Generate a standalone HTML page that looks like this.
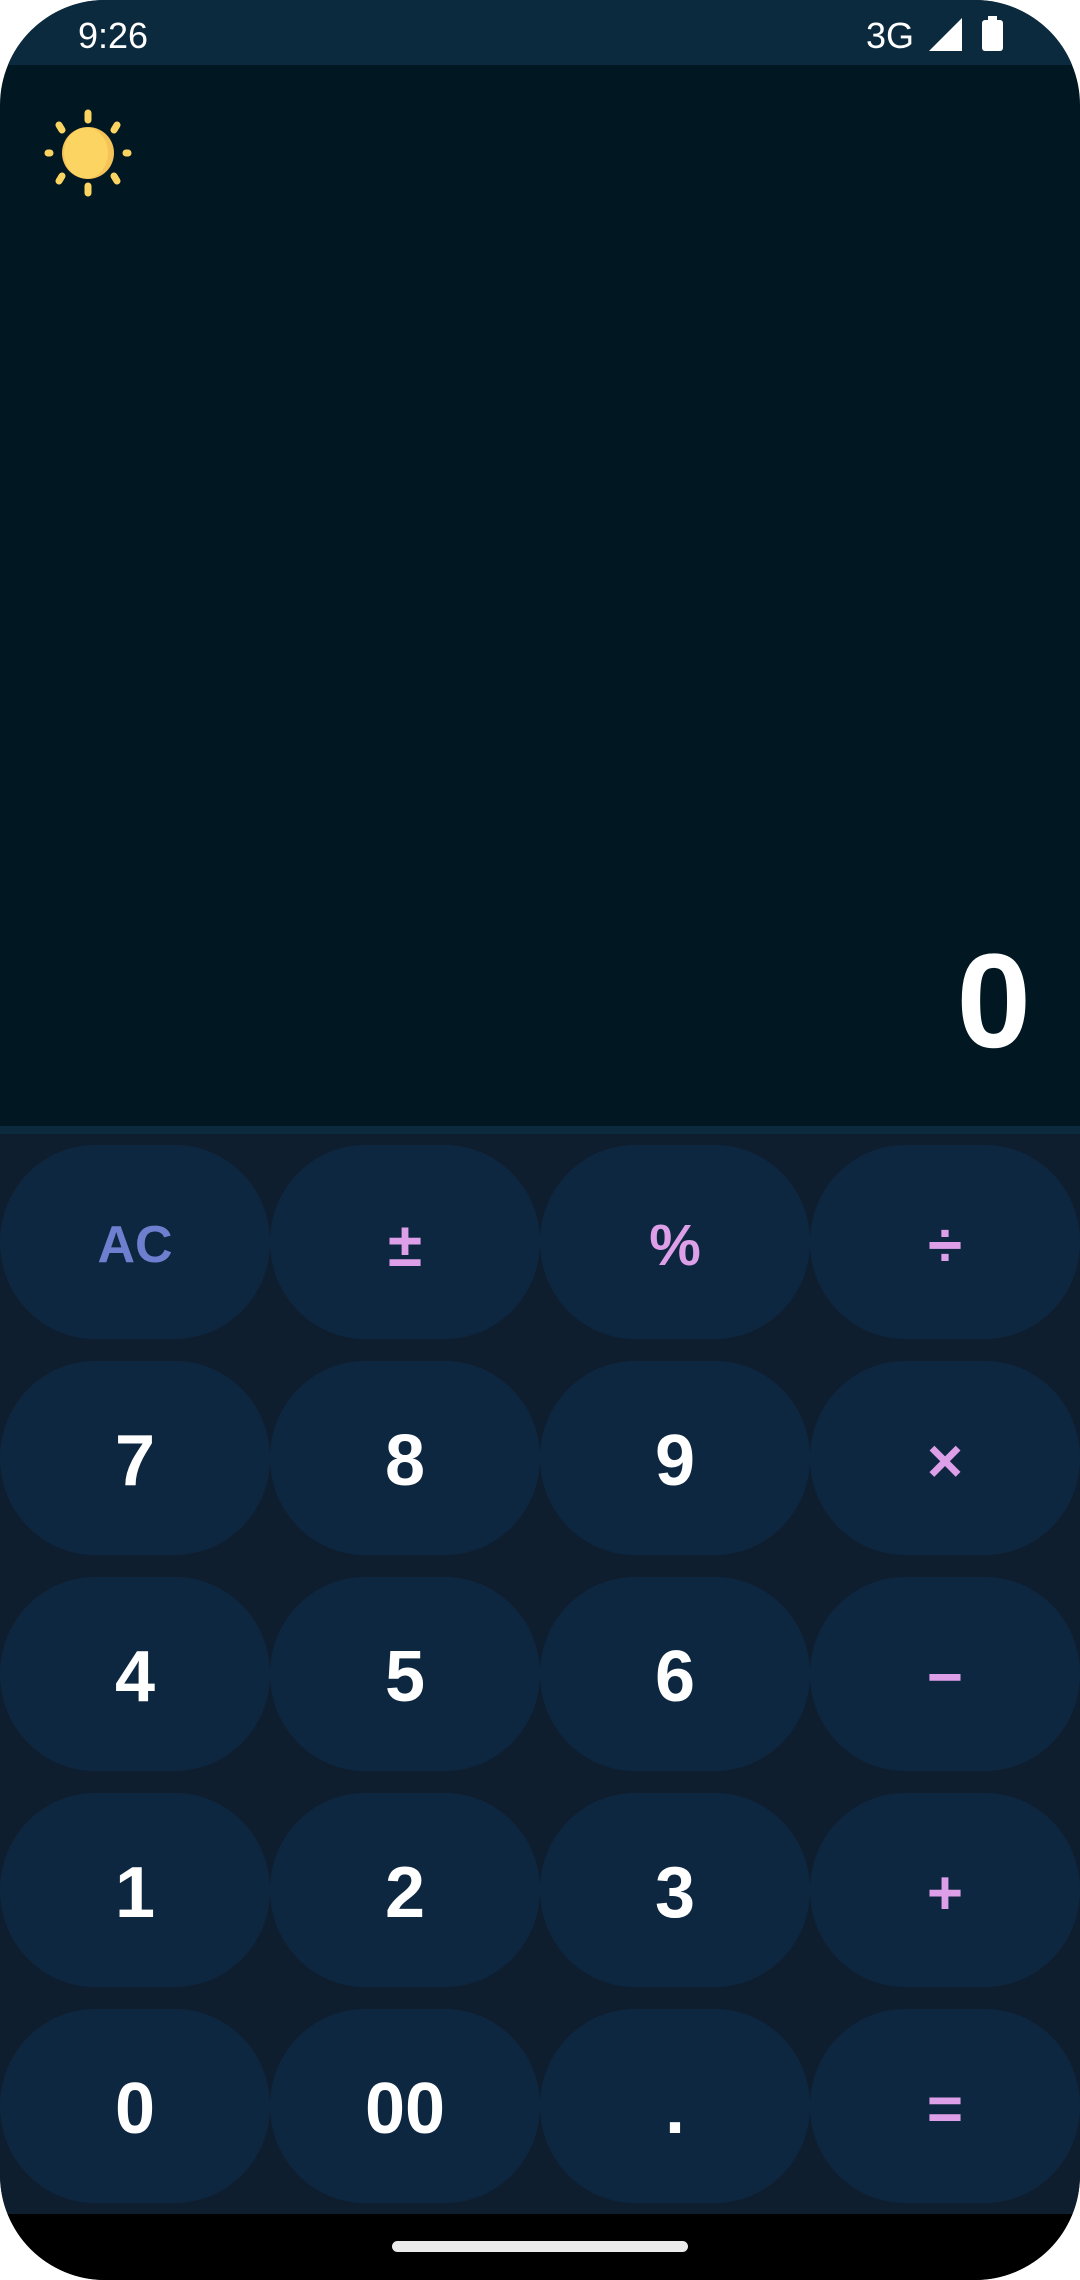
<!DOCTYPE html>
<html><head><meta charset="utf-8"><style>
*{margin:0;padding:0;box-sizing:border-box}
html,body{width:1080px;height:2280px;background:#fff;overflow:hidden}
.phone{position:absolute;left:0;top:0;width:1080px;height:2280px;border-radius:105px;overflow:hidden;background:#011823;font-family:"Liberation Sans",sans-serif}
.sb{position:absolute;left:0;top:0;width:1080px;height:65px;background:#0b2a3e;color:#fff}
.time{position:absolute;left:78px;top:15px;font-size:36px}
.g3{position:absolute;left:866px;top:15px;font-size:36px}
.pad{position:absolute;left:0;top:1126px;width:1080px;height:1088px;background:#0f1e2e;border-top:8px solid #0b2a3d}
.btn{position:absolute;width:270px;height:194px;border-radius:95px/97px;background:#0e2740;color:#fff;font-weight:bold;font-size:72px;display:flex;align-items:center;justify-content:center;padding-top:6px}
.op{color:#dda0e8;font-size:62px}
.nav{position:absolute;left:0;top:2214px;width:1080px;height:66px;background:#000}
.handle{position:absolute;left:392px;top:2241px;width:296px;height:11px;border-radius:6px;background:#ebebeb}
.disp{position:absolute;right:49px;top:927px;color:#fff;font-weight:bold;font-size:134px;line-height:150px}
</style></head><body><div class="phone">
<div class="sb"><div class="time">9:26</div><div class="g3">3G</div>
<svg style="position:absolute;left:926px;top:16px" width="40" height="36"><polygon points="36,2 36,35 3,35" fill="#fff"/></svg>
<svg style="position:absolute;left:980px;top:14px" width="26" height="40"><rect x="8" y="2" width="9" height="5" fill="#fff"/><rect x="2" y="6" width="21" height="31" rx="3" fill="#fff"/></svg>
</div>
<svg style="position:absolute;left:40px;top:105px" width="96" height="96" viewBox="0 0 96 96">
<g stroke="#fcd462" stroke-width="7" stroke-linecap="round">
<line x1="48" y1="8" x2="48" y2="15"/><line x1="48" y1="81" x2="48" y2="88"/>
<line x1="8" y1="48" x2="10" y2="48"/><line x1="86" y1="48" x2="88" y2="48"/>
<line x1="19" y1="20" x2="22" y2="25"/><line x1="77" y1="20" x2="74" y2="25"/>
<line x1="19" y1="76" x2="22" y2="71"/><line x1="77" y1="76" x2="74" y2="71"/>
</g>
<circle cx="48" cy="48" r="26" fill="#f6c358"/>
<ellipse cx="46" cy="48" rx="22" ry="25.5" fill="#fcd462"/>
</svg>
<div class="disp">0</div>
<div class="pad"></div>
<div class="btn" style="left:0;top:1145px;color:#6f7fd0;font-size:52px">AC</div>
<div class="btn op" style="left:270px;top:1145px">±</div>
<div class="btn op" style="left:540px;top:1145px;font-size:58px">%</div>
<div class="btn op" style="left:810px;top:1145px">÷</div>
<div class="btn" style="left:0;top:1361px">7</div>
<div class="btn" style="left:270px;top:1361px">8</div>
<div class="btn" style="left:540px;top:1361px">9</div>
<div class="btn op" style="left:810px;top:1361px">×</div>
<div class="btn" style="left:0;top:1577px">4</div>
<div class="btn" style="left:270px;top:1577px">5</div>
<div class="btn" style="left:540px;top:1577px">6</div>
<div class="btn op" style="left:810px;top:1577px">−</div>
<div class="btn" style="left:0;top:1793px">1</div>
<div class="btn" style="left:270px;top:1793px">2</div>
<div class="btn" style="left:540px;top:1793px">3</div>
<div class="btn op" style="left:810px;top:1793px">+</div>
<div class="btn" style="left:0;top:2009px">0</div>
<div class="btn" style="left:270px;top:2009px">00</div>
<div class="btn" style="left:540px;top:2009px">.</div>
<div class="btn op" style="left:810px;top:2009px">=</div>
<div class="nav"></div><div class="handle"></div>
</div></body></html>
